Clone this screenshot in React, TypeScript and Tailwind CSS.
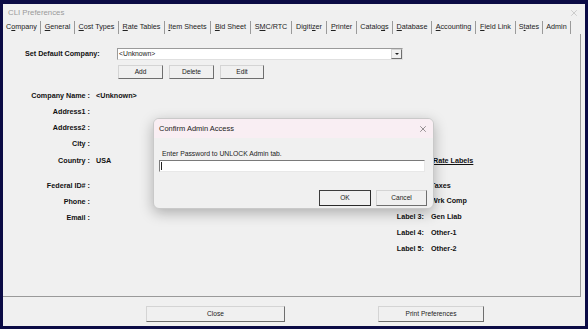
import { X } from 'lucide-react';

interface Tab {
  label: string;
  key?: number;
  width: number;
}

const tabs: Tab[] = [
  { label: 'Company', key: 1, width: 38 },
  { label: 'General', key: 0, width: 34 },
  { label: 'Cost Types', key: 0, width: 44 },
  { label: 'Rate Tables', key: 0, width: 46 },
  { label: 'Item Sheets', key: 0, width: 46 },
  { label: 'Bid Sheet', key: 0, width: 40 },
  { label: 'SMC/RTC', key: 1, width: 41 },
  { label: 'Digitizer', key: 6, width: 35 },
  { label: 'Printer', key: 0, width: 30 },
  { label: 'Catalogs', key: 6, width: 36 },
  { label: 'Database', key: 0, width: 39 },
  { label: 'Accounting', key: 0, width: 44 },
  { label: 'Field Link', key: 0, width: 40 },
  { label: 'States', key: 1, width: 27 },
  { label: 'Admin', width: 28 },
];

const leftRows = [
  { label: 'Company Name :', value: '<Unknown>' },
  { label: 'Address1 :', value: '' },
  { label: 'Address2 :', value: '' },
  { label: 'City :', value: '' },
  { label: 'Country :', value: 'USA' },
];

const contactRows = ['Federal ID# :', 'Phone :', 'Email :'];

const rateLabels = [
  { label: 'Label 1:', value: 'Taxes' },
  { label: 'Label 2:', value: 'Wrk Comp' },
  { label: 'Label 3:', value: 'Gen Liab' },
  { label: 'Label 4:', value: 'Other-1' },
  { label: 'Label 5:', value: 'Other-2' },
];

function TabLabel({ tab }: { tab: Tab }) {
  if (tab.key === undefined) return <>{tab.label}</>;
  const t = tab.label;
  return (
    <>
      {t.slice(0, tab.key)}
      <span className="underline">{t[tab.key]}</span>
      {t.slice(tab.key + 1)}
    </>
  );
}

function WinButton({ label, className, focused }: { label: string; className: string; focused?: boolean }) {
  return (
    <div
      className={`flex items-center justify-center bg-[#f0f0f0] border ${
        focused
          ? 'border-[#3c3c3c] border-r-[#2a2a2a] border-b-[#2a2a2a]'
          : 'border-[#d4d4d4] border-r-[#6e6e6e] border-b-[#6e6e6e]'
      } text-[6.6px] text-[#222] ${className}`}
    >
      {label}
    </div>
  );
}

export default function App() {
  return (
    <div
      className="w-[588px] h-[329px] bg-[#0b0b45] pt-[4px] pl-[3px] pr-[3px] pb-[3px] relative"
      style={{ fontFamily: '"Liberation Sans", Arial, sans-serif' }}
    >
      <div className="w-full h-full bg-[#f0f0f0] flex flex-col">
        {/* title bar */}
        <div className="h-[17px] flex items-center justify-between pl-[5px] pr-[6px] shrink-0">
          <span className="text-[7.8px] text-[#9a9a9a]">CLI Preferences</span>
          <X size={10} strokeWidth={1} className="text-[#9a9a9a]" />
        </div>

        {/* tabs */}
        <div className="h-[13px] flex shrink-0">
          {tabs.map((tab) => (
            <div
              key={tab.label}
              className="flex items-center justify-center text-[7.2px] text-[#222] border-r border-[#9a9a9a] h-full whitespace-nowrap"
              style={{ width: tab.width }}
            >
              <TabLabel tab={tab} />
            </div>
          ))}
        </div>

        {/* panel */}
        <div className="h-[263px] w-[578px] border-r border-b border-[#9a9a9a] shrink-0 flex flex-col">
          <div className="flex items-center mt-[14px] pl-[22px] h-[12px]">
            <span className="w-[92px] text-[7.2px] font-bold text-[#111]">Set Default Company:</span>
            <div className="w-[286px] h-[12px] bg-white border border-[#9a9a9a] border-r-[#e0e0e0] border-b-[#e0e0e0] flex items-center justify-between">
              <span className="text-[6.8px] pl-[1px] text-[#222]">&lt;Unknown&gt;</span>
              <div className="w-[11px] h-[10px] bg-[#f0f0f0] border border-[#d4d4d4] border-r-[#6e6e6e] border-b-[#6e6e6e] flex items-center justify-center">
                <div className="w-0 h-0 border-l-[2px] border-r-[2px] border-t-[2px] border-l-transparent border-r-transparent border-t-[#222]" />
              </div>
            </div>
          </div>

          <div className="flex gap-[6px] ml-[115px] mt-[5px]">
            <WinButton label="Add" className="w-[45px] h-[14px]" />
            <WinButton label="Delete" className="w-[45px] h-[14px]" />
            <WinButton label="Edit" className="w-[44px] h-[14px]" />
          </div>

          <div className="flex mt-[9px]">
            <div className="flex flex-col w-[385px]">
              {leftRows.map((r) => (
                <div key={r.label} className="flex items-center h-[16.25px]">
                  <span className="w-[87px] text-right text-[7.2px] font-bold text-[#111]">{r.label}</span>
                  <span className="ml-[6px] text-[7.2px] font-bold text-[#111]">{r.value}</span>
                </div>
              ))}
              <div className="h-[9px]" />
              {contactRows.map((r) => (
                <div key={r} className="flex items-center h-[16px]">
                  <span className="w-[87px] text-right text-[7.2px] font-bold text-[#111]">{r}</span>
                </div>
              ))}
            </div>

            <div className="flex flex-col mt-[65px]">
              <div className="flex items-center h-[16px] pl-[45px]">
                <span className="text-[7.2px] font-bold text-[#111] underline">Rate Labels</span>
              </div>
              <div className="h-[9px]" />
              {rateLabels.map((r) => (
                <div key={r.label} className="flex items-center h-[15.8px]">
                  <span className="w-[36px] text-right text-[7.2px] font-bold text-[#111]">{r.label}</span>
                  <span className="ml-[7px] text-[7.2px] font-bold text-[#111]">{r.value}</span>
                </div>
              ))}
            </div>
          </div>
        </div>

        {/* bottom buttons */}
        <div className="flex mt-[9px]">
          <WinButton label="Close" className="ml-[143px] w-[139px] h-[16px]" />
          <WinButton label="Print Preferences" className="ml-[93px] w-[106px] h-[16px]" />
        </div>
      </div>

      {/* dialog */}
      <div className="absolute left-[153px] top-[118px] w-[281px] h-[91px] rounded-[6px] border border-[#c9c9c9] bg-[#f0f0f0] shadow-[0_4px_14px_rgba(0,0,0,0.28)] overflow-hidden flex flex-col">
        <div className="h-[19px] bg-[#f9eef3] flex items-center justify-between pl-[5px] pr-[5px]">
          <span className="text-[7.5px] text-[#222]">Confirm Admin Access</span>
          <X size={10} strokeWidth={1.2} className="text-[#333]" />
        </div>
        <div className="text-[6.8px] text-[#222] pl-[8px] mt-[11px] leading-[10px]">Enter Password to UNLOCK Admin tab.</div>
        <div className="ml-[5px] mt-[1px] w-[266px] h-[12px] bg-white border border-[#7a7a7a] border-r-[#e8e8e8] border-b-[#e8e8e8] flex items-center pl-[1px]">
          <div className="w-[1px] h-[8px] bg-[#222]" />
        </div>
        <div className="flex mt-[18px] ml-[165px] gap-[5px]">
          <WinButton label="OK" className="w-[52px] h-[16px]" focused />
          <WinButton label="Cancel" className="w-[51px] h-[16px]" />
        </div>
      </div>
    </div>
  );
}
